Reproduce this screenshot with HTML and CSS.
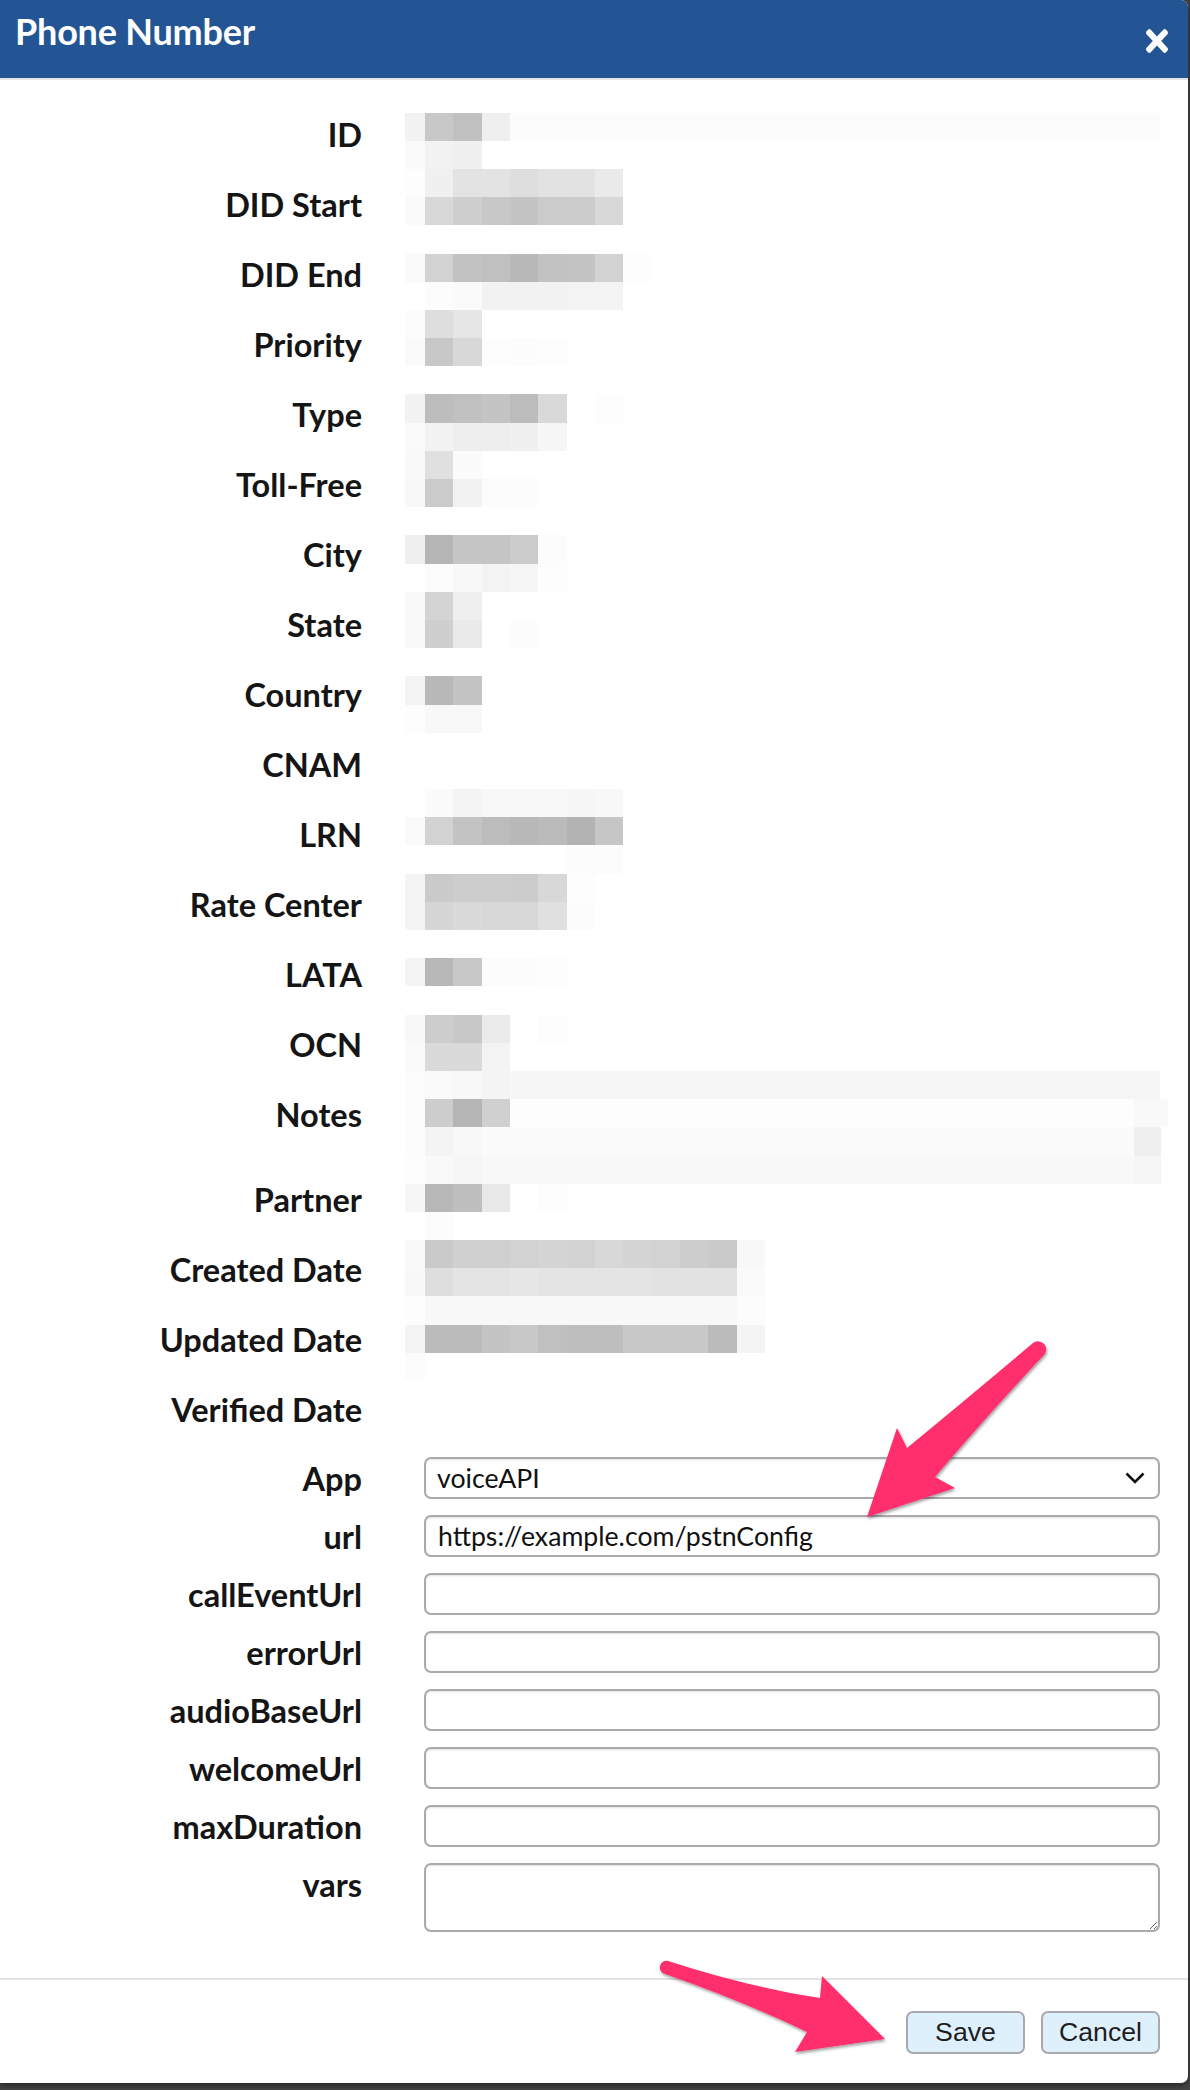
FILE: index.html
```html
<!DOCTYPE html>
<html>
<head>
<meta charset="utf-8">
<title>Phone Number</title>
<link rel="stylesheet" href="styles.css">
</head>
<body>
<div class="dialog">
  <header class="dlg-head">
    <h1 class="dlg-title">Phone Number</h1>
    <button class="dlg-close" aria-label="Close">
      <svg viewBox="0 80 352 352" width="22" height="24" preserveAspectRatio="none"><path fill="#fff" d="M242.72 256l100.07-100.07c12.28-12.28 12.28-32.19 0-44.48l-22.24-22.24c-12.28-12.28-32.19-12.28-44.48 0L176 189.28 75.93 89.21c-12.28-12.28-32.19-12.28-44.48 0L9.21 111.45c-12.28 12.28-12.28 32.19 0 44.48L109.28 256 9.21 356.07c-12.28 12.28-12.28 32.19 0 44.48l22.24 22.24c12.28 12.28 32.2 12.28 44.48 0L176 322.72l100.07 100.07c12.28 12.28 32.2 12.28 44.48 0l22.24-22.24c12.28-12.28 12.28-32.19 0-44.48L242.72 256z"/></svg>
    </button>
  </header>

  <div class="dlg-body">
    <div class="fields">
      <div class="row"><span class="lbl">ID</span><span class="val"></span></div>
      <div class="row"><span class="lbl">DID Start</span><span class="val"></span></div>
      <div class="row"><span class="lbl">DID End</span><span class="val"></span></div>
      <div class="row"><span class="lbl">Priority</span><span class="val"></span></div>
      <div class="row"><span class="lbl">Type</span><span class="val"></span></div>
      <div class="row"><span class="lbl">Toll-Free</span><span class="val"></span></div>
      <div class="row"><span class="lbl">City</span><span class="val"></span></div>
      <div class="row"><span class="lbl">State</span><span class="val"></span></div>
      <div class="row"><span class="lbl">Country</span><span class="val"></span></div>
      <div class="row"><span class="lbl">CNAM</span><span class="val"></span></div>
      <div class="row"><span class="lbl">LRN</span><span class="val"></span></div>
      <div class="row"><span class="lbl">Rate Center</span><span class="val"></span></div>
      <div class="row"><span class="lbl">LATA</span><span class="val"></span></div>
      <div class="row"><span class="lbl">OCN</span><span class="val"></span></div>
      <div class="row row-notes"><span class="lbl">Notes</span><span class="val"></span></div>
      <div class="row"><span class="lbl">Partner</span><span class="val"></span></div>
      <div class="row"><span class="lbl">Created Date</span><span class="val"></span></div>
      <div class="row"><span class="lbl">Updated Date</span><span class="val"></span></div>
      <div class="row"><span class="lbl">Verified Date</span><span class="val"></span></div>
    </div>

    <div class="mosaic" aria-hidden="true">
      <div class="mr"><i class="a" style="background:#f2f2f2"></i><i style="background:#c8c8c8"></i><i style="background:#c0c0c0"></i><i style="background:#efefef"></i><i style="background:#fcfcfc;width:650px"></i></div>
      <div class="mr"><i class="a" style="background:#fafafa"></i><i style="background:#f2f2f2"></i><i style="background:#f0f0f0"></i></div>
      <div class="mr"><i class="a" style="background:#fdfdfd"></i><i style="background:#f0f0f0"></i><i style="background:#e3e3e3"></i><i style="background:#e3e3e3"></i><i style="background:#dedede"></i><i style="background:#e2e2e2"></i><i style="background:#e2e2e2"></i><i style="background:#eaeaea"></i></div>
      <div class="mr"><i class="a" style="background:#fafafa"></i><i style="background:#d8d8d8"></i><i style="background:#cfcfcf"></i><i style="background:#c8c8c8"></i><i style="background:#c4c4c4"></i><i style="background:#cbcbcb"></i><i style="background:#cccccc"></i><i style="background:#d8d8d8"></i></div>
      <div class="mr"></div>
      <div class="mr"><i class="a" style="background:#fafafa"></i><i style="background:#d2d2d2"></i><i style="background:#c2c2c2"></i><i style="background:#c0c0c0"></i><i style="background:#b9b9b9"></i><i style="background:#c2c2c2"></i><i style="background:#c4c4c4"></i><i style="background:#d2d2d2"></i><i style="background:#fdfdfd"></i></div>
      <div class="mr"><i class="a"></i><i style="background:#fcfcfc"></i><i style="background:#fafafa"></i><i style="background:#f2f2f2"></i><i style="background:#f2f2f2"></i><i style="background:#f2f2f2"></i><i style="background:#f3f3f3"></i><i style="background:#f3f3f3"></i></div>
      <div class="mr"><i class="a" style="background:#fcfcfc"></i><i style="background:#dedede"></i><i style="background:#e6e6e6"></i></div>
      <div class="mr"><i class="a" style="background:#fafafa"></i><i style="background:#c8c8c8"></i><i style="background:#d8d8d8"></i><i style="background:#fdfdfd"></i><i style="background:#fcfcfc"></i><i style="background:#fdfdfd"></i></div>
      <div class="mr"></div>
      <div class="mr"><i class="a" style="background:#f2f2f2"></i><i style="background:#bdbdbd"></i><i style="background:#c0c0c0"></i><i style="background:#c4c4c4"></i><i style="background:#bcbcbc"></i><i style="background:#d9d9d9"></i><i></i><i style="background:#fdfdfd"></i></div>
      <div class="mr"><i class="a" style="background:#fafafa"></i><i style="background:#f2f2f2"></i><i style="background:#eeeeee"></i><i style="background:#eeeeee"></i><i style="background:#f0f0f0"></i><i style="background:#f6f6f6"></i></div>
      <div class="mr"><i class="a" style="background:#f9f9f9"></i><i style="background:#e0e0e0"></i><i style="background:#fbfbfb"></i></div>
      <div class="mr"><i class="a" style="background:#f8f8f8"></i><i style="background:#cbcbcb"></i><i style="background:#f2f2f2"></i><i style="background:#fcfcfc"></i><i style="background:#fcfcfc"></i></div>
      <div class="mr"></div>
      <div class="mr"><i class="a" style="background:#efefef"></i><i style="background:#b5b5b5"></i><i style="background:#c5c5c5"></i><i style="background:#c5c5c5"></i><i style="background:#cbcbcb"></i><i style="background:#fcfcfc"></i></div>
      <div class="mr"><i class="a"></i><i style="background:#fcfcfc"></i><i style="background:#f8f8f8"></i><i style="background:#f3f3f3"></i><i style="background:#f6f6f6"></i><i style="background:#fdfdfd"></i></div>
      <div class="mr"><i class="a" style="background:#f9f9f9"></i><i style="background:#d4d4d4"></i><i style="background:#efefef"></i></div>
      <div class="mr"><i class="a" style="background:#f9f9f9"></i><i style="background:#cfcfcf"></i><i style="background:#eaeaea"></i><i></i><i style="background:#fcfcfc"></i></div>
      <div class="mr"></div>
      <div class="mr"><i class="a" style="background:#f4f4f4"></i><i style="background:#b9b9b9"></i><i style="background:#c4c4c4"></i></div>
      <div class="mr"><i class="a" style="background:#fdfdfd"></i><i style="background:#f8f8f8"></i><i style="background:#f8f8f8"></i></div>
      <div class="mr"></div>
      <div class="mr"></div>
      <div class="mr"><i class="a"></i><i style="background:#fbfbfb"></i><i style="background:#f4f4f4"></i><i style="background:#f8f8f8"></i><i style="background:#f8f8f8"></i><i style="background:#f8f8f8"></i><i style="background:#f6f6f6"></i><i style="background:#f8f8f8"></i></div>
      <div class="mr"><i class="a" style="background:#fafafa"></i><i style="background:#d2d2d2"></i><i style="background:#c3c3c3"></i><i style="background:#bcbcbc"></i><i style="background:#b8b8b8"></i><i style="background:#bbbbbb"></i><i style="background:#b3b3b3"></i><i style="background:#c6c6c6"></i></div>
      <div class="mr"><i class="a"></i><i></i><i></i><i></i><i></i><i></i><i style="background:#fcfcfc"></i><i style="background:#fcfcfc"></i></div>
      <div class="mr"><i class="a" style="background:#f4f4f4"></i><i style="background:#cacaca"></i><i style="background:#cdcdcd"></i><i style="background:#cdcdcd"></i><i style="background:#cccccc"></i><i style="background:#d8d8d8"></i><i style="background:#fdfdfd"></i></div>
      <div class="mr"><i class="a" style="background:#f4f4f4"></i><i style="background:#d6d6d6"></i><i style="background:#dadada"></i><i style="background:#d8d8d8"></i><i style="background:#d8d8d8"></i><i style="background:#e0e0e0"></i><i style="background:#fcfcfc"></i></div>
      <div class="mr"></div>
      <div class="mr"><i class="a" style="background:#f4f4f4"></i><i style="background:#b8b8b8"></i><i style="background:#c8c8c8"></i><i style="background:#fcfcfc"></i><i style="background:#fcfcfc"></i><i style="background:#fdfdfd"></i></div>
      <div class="mr"></div>
      <div class="mr"><i class="a" style="background:#f8f8f8"></i><i style="background:#cdcdcd"></i><i style="background:#c8c8c8"></i><i style="background:#ebebeb"></i><i></i><i style="background:#fdfdfd"></i></div>
      <div class="mr"><i class="a" style="background:#fafafa"></i><i style="background:#dadada"></i><i style="background:#dadada"></i><i style="background:#f3f3f3"></i></div>
      <div class="mr"><i class="a" style="background:#fcfcfc"></i><i style="background:#fafafa"></i><i style="background:#f8f8f8"></i><i style="background:#f4f4f4"></i><i style="background:#f6f6f6;width:650px"></i></div>
      <div class="mr"><i class="a" style="background:#fcfcfc"></i><i style="background:#cdcdcd"></i><i style="background:#b5b5b5"></i><i style="background:#d0d0d0"></i><i style="background:#fdfdfd;width:624px"></i><i style="background:#f9f9f9;width:34px"></i></div>
      <div class="mr"><i class="a" style="background:#fcfcfc"></i><i style="background:#f4f4f4"></i><i style="background:#f8f8f8"></i><i style="background:#fbfbfb;width:652px"></i><i style="background:#eeefee;width:27px"></i></div>
      <div class="mr"><i class="a" style="background:#fdfdfd"></i><i style="background:#f9f9f9"></i><i style="background:#f6f6f6"></i><i style="background:#f8f8f8;width:652px"></i><i style="background:#f6f6f6;width:27px"></i></div>
      <div class="mr"><i class="a" style="background:#f6f6f6"></i><i style="background:#b8b8b8"></i><i style="background:#bebebe"></i><i style="background:#e8e8e8"></i><i></i><i style="background:#fdfdfd"></i></div>
      <div class="mr"><i class="a"></i><i style="background:#fcfcfc"></i></div>
      <div class="mr"><i class="a" style="background:#f9f9f9"></i><i style="background:#cacaca"></i><i style="background:#d0d0d0"></i><i style="background:#d0d0d0"></i><i style="background:#d2d2d2"></i><i style="background:#d4d4d4"></i><i style="background:#d2d2d2"></i><i style="background:#d8d8d8"></i><i style="background:#d4d4d4"></i><i style="background:#d2d2d2"></i><i style="background:#cdcdcd"></i><i style="background:#cacaca"></i><i style="background:#f8f8f8"></i></div>
      <div class="mr"><i class="a" style="background:#f8f8f8"></i><i style="background:#dedede"></i><i style="background:#e4e4e4"></i><i style="background:#e4e4e4"></i><i style="background:#e6e6e6"></i><i style="background:#e4e4e4"></i><i style="background:#e4e4e4"></i><i style="background:#e4e4e4"></i><i style="background:#e4e4e4"></i><i style="background:#e2e2e2"></i><i style="background:#e2e2e2"></i><i style="background:#e2e2e2"></i><i style="background:#fafafa"></i></div>
      <div class="mr"><i class="a" style="background:#fdfdfd"></i><i style="background:#f8f8f8;width:311.8px"></i><i style="background:#fcfcfc"></i></div>
      <div class="mr"><i class="a" style="background:#f4f4f4"></i><i style="background:#bbbbbb"></i><i style="background:#bbbbbb"></i><i style="background:#c4c4c4"></i><i style="background:#c8c8c8"></i><i style="background:#c0c0c0"></i><i style="background:#bebebe"></i><i style="background:#bebebe"></i><i style="background:#c8c8c8"></i><i style="background:#c8c8c8"></i><i style="background:#c8c8c8"></i><i style="background:#bbbbbb"></i><i style="background:#f4f4f4"></i></div>
      <div class="mr"><i class="a" style="background:#fcfcfc"></i></div>
    </div>

    <div class="app-form">
      <div class="frow"><label class="lbl" for="f-app">App</label>
        <div class="select-wrap">
          <select id="f-app" class="ctl"><option>voiceAPI</option></select>
          <svg class="chev" width="20" height="12" viewBox="0 0 20 12"><polyline points="1.5,1.5 10,10 18.5,1.5" fill="none" stroke="#111" stroke-width="2.6" stroke-linejoin="miter"/></svg>
        </div>
      </div>
      <div class="frow"><label class="lbl" for="f-url">url</label><input id="f-url" class="ctl" type="text" value="https://example.com/pstnConfig"></div>
      <div class="frow"><label class="lbl" for="f-ce">callEventUrl</label><input id="f-ce" class="ctl" type="text"></div>
      <div class="frow"><label class="lbl" for="f-err">errorUrl</label><input id="f-err" class="ctl" type="text"></div>
      <div class="frow"><label class="lbl" for="f-ab">audioBaseUrl</label><input id="f-ab" class="ctl" type="text"></div>
      <div class="frow"><label class="lbl" for="f-wel">welcomeUrl</label><input id="f-wel" class="ctl" type="text"></div>
      <div class="frow"><label class="lbl" for="f-max">maxDuration</label><input id="f-max" class="ctl" type="text"></div>
      <div class="frow"><label class="lbl" for="f-vars">vars</label><textarea id="f-vars" class="ctl ta"></textarea></div>
    </div>
  </div>

  <footer class="dlg-foot">
    <button class="btn">Save</button>
    <button class="btn">Cancel</button>
  </footer>
</div>

<svg class="annot" width="1190" height="2090" viewBox="0 0 1190 2090" aria-hidden="true">
  <defs>
    <filter id="sh" x="-20%" y="-20%" width="140%" height="140%">
      <feDropShadow dx="1" dy="2" stdDeviation="1.6" flood-color="#000" flood-opacity="0.38"/>
    </filter>
  </defs>
  <path filter="url(#sh)" fill="#ff2d6c" d="M1033,1343 Q975,1392 907,1448 L897,1428 L867,1517 L955,1488 L935,1477 Q985,1418 1043,1356 A7,7 0 0 0 1033,1343 Z"/>
  <path filter="url(#sh)" fill="#ff2d6c" d="M668,1961 Q748,1987 820,1998 L822,1976 L885,2039 L795,2052 L807,2032 Q740,2000 665,1974 A6.5,6.5 0 0 1 668,1961 Z"/>
</svg>
</body>
</html>
```

FILE: styles.css
```css
html, body {
  margin: 0;
  padding: 0;
}
body {
  width: 1190px;
  height: 2090px;
  background: #444444;
  position: relative;
  overflow: hidden;
  font-family: Lato, "Open Sans", sans-serif;
  color: #151515;
}
.dialog {
  width: 1188px;
  height: 2083px;
  background: #ffffff;
  border-radius: 0 7px 7px 0;
  overflow: hidden;
  display: flex;
  flex-direction: column;
  box-shadow: 0 2px 6px rgba(0,0,0,.5);
}
.dlg-head {
  height: 78px;
  flex: none;
  background: #235594;
  border-bottom: 2px solid #e4e5e7;
  display: flex;
  align-items: flex-start;
  justify-content: space-between;
}
.dlg-title {
  margin: 0;
  padding: 10px 0 0 15px;
  font-family: Lato, sans-serif;
  font-weight: 700;
  font-size: 36px;
  line-height: 43px;
  color: #ffffff;
  letter-spacing: -0.2px;
}
.dlg-close {
  margin: 29px 20px 0 0;
  padding: 0;
  border: 0;
  background: transparent;
  width: 22px;
  height: 24px;
  display: block;
}
.dlg-close svg { display: block; }

.dlg-body {
  flex: 1;
  position: relative;
  padding: 18px 28px 0 0;
}
.fields { display: flex; flex-direction: column; }
.row {
  display: grid;
  grid-template-columns: 362px 1fr;
  column-gap: 43px;
  height: 70px;
  align-items: start;
}
.row-notes { height: 85px; }
.lbl {
  box-sizing: border-box;
  text-align: right;
  font-weight: 700;
  font-size: 32.5px;
  line-height: 70px;
  height: 70px;
  padding-top: 1.5px;
  color: #151515;
  white-space: nowrap;
}

.mosaic {
  position: absolute;
  left: 405px;
  top: 32.6px;
  display: flex;
  flex-direction: column;
}
.mr {
  height: 28.2px;
  display: flex;
}
.mr i {
  display: block;
  width: 28.35px;
  height: 100%;
  flex: none;
}
.mr i.a { width: 20px; }

.app-form {
  margin-top: 14px;
  display: flex;
  flex-direction: column;
  gap: 16px;
}
.frow {
  display: grid;
  grid-template-columns: 362px 1fr;
  column-gap: 62px;
  align-items: start;
}
.frow .lbl { line-height: 42px; height: 42px; padding-top: 1px; }
.ctl {
  box-sizing: border-box;
  width: 100%;
  height: 42px;
  margin: 0;
  border: 2px solid #a9a9ae;
  border-radius: 7px;
  background: #ffffff;
  padding: 0 12px;
  font-family: Lato, sans-serif;
  font-size: 26.67px;
  color: #111111;
  box-shadow: inset 0 1px 2px rgba(0,0,0,.12);
  outline: none;
}
.select-wrap { position: relative; }
select.ctl {
  -webkit-appearance: none;
  appearance: none;
  padding-left: 11px;
  line-height: 36px;
}
.chev {
  position: absolute;
  right: 15px;
  top: 15px;
  pointer-events: none;
}
.ta {
  height: 69px;
  resize: both;
  padding-top: 6px;
}

.dlg-foot {
  flex: none;
  border-top: 2px solid #e3e3e3;
  margin-top: 45px;
  padding: 31px 28px 0 0;
  height: 72px;
  display: flex;
  justify-content: flex-end;
  align-items: flex-start;
  gap: 16px;
}
.btn {
  box-sizing: border-box;
  width: 119px;
  height: 43px;
  margin: 0;
  padding: 0;
  border: 2px solid #a9a9ae;
  border-radius: 7px;
  background: #dff0fd;
  font-family: "Liberation Sans", Arial, sans-serif;
  font-size: 26.67px;
  color: #1e1e1e;
}

.annot {
  position: absolute;
  left: 0;
  top: 0;
  pointer-events: none;
}
```
